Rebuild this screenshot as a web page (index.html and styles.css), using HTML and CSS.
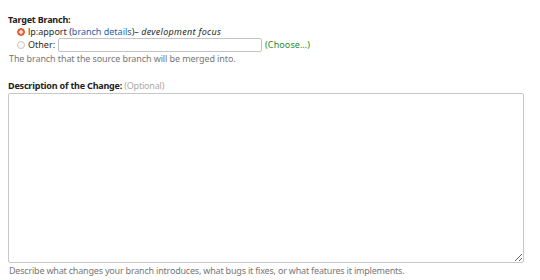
FILE: index.html
```html
<!DOCTYPE html>
<html>
<head>
  <title>Propose for merging</title>
  <meta name="viewport" content="width=device-width, initial-scale=1.0">
  <link rel="stylesheet" href="styles.css">
</head>
<body>
  <form class="merge-form">
    <div class="field">
      <div class="field-label">Target Branch:</div>
      <div class="choices">
        <label class="choice">
          <span class="radio checked"></span>
          <span>lp:apport (<a href="#" class="link">branch details</a>)– <em class="focus">development focus</em></span>
        </label>
        <label class="choice other">
          <span class="radio"></span>
          <span>Other:</span>
          <input type="text" class="branch-input">
          <a href="#" class="choose">(Choose…)</a>
        </label>
      </div>
      <p class="hint first">The branch that the source branch will be merged into.</p>
    </div>

    <div class="field desc">
      <div class="field-label">Description of the Change: <span class="optional">(Optional)</span></div>
      <textarea class="description"></textarea>
      <p class="hint">Describe what changes your branch introduces, what bugs it fixes, or what features it implements.</p>
    </div>
  </form>
</body>
</html>
```

FILE: styles.css
```css
* {
  margin: 0;
  padding: 0;
  box-sizing: border-box;
}

body {
  font-family: "Noto Sans", "Open Sans", sans-serif;
  font-size: 9px;
  letter-spacing: -0.2px;
  line-height: 12px;
  color: #2b2b2b;
  background: #fff;
  padding: 14px 8px 0 8px;
}

.field-label {
  font-weight: bold;
  color: #222;
}

.optional {
  font-weight: normal;
  color: #aaa;
}

.choices {
  padding-left: 9px;
  letter-spacing: 0;
}

.choice {
  display: flex;
  align-items: center;
  gap: 3px;
  height: 12px;
}

.choice.other {
  height: 14px;
}

.focus {
  letter-spacing: 0.3px;
}

.radio {
  width: 8px;
  height: 8px;
  border-radius: 50%;
  border: 1px solid #c8c8c8;
  background: #fafafa;
}

.radio.checked {
  border-color: #d8542a;
  background: radial-gradient(circle, #fbe3d8 0 1.5px, #ee6a3c 2px);
}

.link {
  color: #1f5fa8;
  text-decoration: none;
}

.branch-input {
  width: 204px;
  height: 14px;
  border: 1px solid #c4c4c4;
  border-radius: 2px;
}

.choose {
  color: #2a8a2a;
  text-decoration: none;
  letter-spacing: 0.1px;
}

.hint {
  color: #777;
  margin-top: 1px;
  padding-left: 1px;
}

.hint.first {
  letter-spacing: -0.1px;
}

.desc {
  margin-top: 15px;
}

.description {
  display: block;
  width: 516px;
  height: 170px;
  margin-top: 1px;
  border: 1px solid #c8c8c8;
  border-radius: 2px;
  resize: vertical;
}

.desc .hint {
  margin-top: 2px;
}
```
